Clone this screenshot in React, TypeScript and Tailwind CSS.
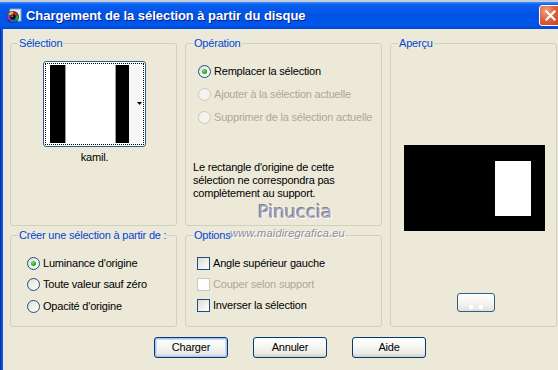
import React from "react";

function Radio({ checked = false, disabled = false }: { checked?: boolean; disabled?: boolean }) {
  return (
    <span
      className={
        "relative flex h-[13px] w-[13px] shrink-0 items-center justify-center rounded-full border " +
        (disabled
          ? "border-[#cac8bb] bg-[#f4f3ee]"
          : "border-[#1c5180] bg-[linear-gradient(135deg,#dcdcd7_0%,#f0f0ea_45%,#ffffff_100%)]")
      }
    >
      {checked && (
        <span className="h-[5px] w-[5px] rounded-full bg-[radial-gradient(circle_at_40%_35%,#7fe27f_0%,#21a121_60%,#1a8a1a_100%)]" />
      )}
    </span>
  );
}

function Check({ disabled = false }: { disabled?: boolean }) {
  return (
    <span
      className={
        "h-[13px] w-[13px] shrink-0 border " +
        (disabled
          ? "border-[#cac8bb] bg-white"
          : "border-[#1c5180] bg-[linear-gradient(135deg,#dcdcd7_0%,#f2f2ee_60%,#ffffff_100%)]")
      }
    />
  );
}

function Group({
  legend,
  className = "",
  children,
}: {
  legend: string;
  className?: string;
  children?: React.ReactNode;
}) {
  return (
    <div className={"relative rounded-[3px] border border-[#d0d0bf] " + className}>
      <span className="absolute -top-[7px] left-[7px] bg-[#ece9d8] px-[1px] leading-[13px] text-[#0046d5] whitespace-nowrap">
        {legend}
      </span>
      {children}
    </div>
  );
}

function Btn({ label, def = false, w = "w-[74px]" }: { label: string; def?: boolean; w?: string }) {
  return (
    <div
      className={
        "flex h-[21px] items-center justify-center rounded-[3px] border border-[#003c74] bg-[linear-gradient(180deg,#ffffff_0%,#f7f7f4_40%,#ecebe6_80%,#d6d0c5_100%)] leading-[13px] text-black " +
        w +
        (def ? " shadow-[inset_0_0_0_1px_#a9c4f2,inset_0_0_0_2px_#c9dbf8]" : "")
      }
    >
      {label}
    </div>
  );
}

function TitleIcon() {
  return (
    <svg width="16" height="16" viewBox="0 0 16 16">
      <rect x="4" y="1" width="11" height="12" fill="#e8eef8" stroke="#8aa0c0" strokeWidth="1" />
      <circle cx="7" cy="9" r="6" fill="#1a1a28" />
      <path d="M7 9 L7 3.5 A5.5 5.5 0 0 1 12 7 Z" fill="#d02020" />
      <path d="M7 9 L12 7 A5.5 5.5 0 0 1 10 13.5 Z" fill="#20a040" />
      <path d="M7 9 L10 13.5 A5.5 5.5 0 0 1 3 12.5 Z" fill="#2060d0" />
      <path d="M7 9 L3 12.5 A5.5 5.5 0 0 1 2 6 Z" fill="#c020c0" />
      <path d="M7 9 L2 6 A5.5 5.5 0 0 1 7 3.5 Z" fill="#e0c020" />
      <circle cx="7" cy="9" r="2.8" fill="#101018" />
      <circle cx="6.2" cy="8.2" r="0.9" fill="#8090b0" />
    </svg>
  );
}

export default function App() {
  return (
    <div className="relative h-[370px] w-[558px] overflow-hidden bg-[#ece9d8] font-['Liberation_Sans',Arial,sans-serif] text-[11px] tracking-[-0.2px] text-black">
      <div className="h-[2px] bg-[#c4ccd8]" />
      {/* Title bar */}
      <div className="flex h-[27px] items-center bg-[linear-gradient(180deg,#3d8dff_0%,#0a5ff0_10%,#0054e3_45%,#0056ea_85%,#0046d6_100%)] pl-[6px]">
        <TitleIcon />
        <span className="ml-[4px] font-['Liberation_Sans',Arial,sans-serif] text-[13px] font-bold leading-[16px] tracking-[-0.05px] text-white [text-shadow:1px_1px_0_#0a1e8c] whitespace-nowrap">
          Chargement de la sélection à partir du disque
        </span>
        <div className="ml-auto mr-[-3px] flex h-[21px] w-[22px] items-center justify-center rounded-[3px] border border-white bg-[radial-gradient(circle_at_30%_25%,#f0a085_0%,#e0603c_45%,#c8401c_100%)]">
          <svg width="11" height="11" viewBox="0 0 11 11">
            <path d="M1.5 1.5 L9.5 9.5 M9.5 1.5 L1.5 9.5" stroke="#ffffff" strokeWidth="2.2" strokeLinecap="square" />
          </svg>
        </div>
      </div>

      {/* Body */}
      <div className="flex h-[341px]">
        <div className="w-[3px] border-l border-[#0b2fa6] bg-[#0a55e6]" />
        <div className="flex flex-col pl-[7px] pt-[14px]">
          <div className="grid grid-cols-[167px_197px_167px] grid-rows-[183px_92px] gap-x-[8px] gap-y-[9px]">
            {/* Sélection */}
            <Group legend="Sélection">
              <div className="ml-[32px] mt-[17px] flex w-[103px] flex-col items-center">
                <div className="relative h-[86px] w-[103px] rounded-[3px] border border-[#2f5d8c] bg-white p-[1px]">
                  <div className="h-full w-full border border-dotted border-black p-[1px]">
                    <div className="flex h-full w-full bg-white">
                      <div className="w-[3px] bg-white" />
                      <div className="w-[15px] bg-black" />
                      <div className="w-[1px] bg-[#9a9a9a]" />
                      <div className="w-[49px] bg-white" />
                      <div className="w-[1px] bg-[#9a9a9a]" />
                      <div className="w-[13px] bg-black" />
                      <div className="flex-1 bg-[#f6f6f6]" />
                    </div>
                  </div>
                  <svg className="absolute left-[93px] top-[40px]" width="5" height="3" viewBox="0 0 5 3">
                    <path d="M0 0 H5 L2.5 3 Z" fill="#000" />
                  </svg>
                </div>
                <div className="mt-[4px] leading-[13px]">kamil.</div>
              </div>
            </Group>

            {/* Opération */}
            <Group legend="Opération">
              <div className="flex flex-col pl-[7px] pt-[21px]">
                <div className="ml-[5px] flex flex-col gap-[10px]">
                  <div className="flex h-[13px] items-center gap-[3px] leading-[13px]">
                    <Radio checked />
                    <span>Remplacer la sélection</span>
                  </div>
                  <div className="flex h-[13px] items-center gap-[3px] leading-[13px] text-[#aca899]">
                    <Radio disabled />
                    <span>Ajouter à la sélection actuelle</span>
                  </div>
                  <div className="flex h-[13px] items-center gap-[3px] leading-[13px] text-[#aca899]">
                    <Radio disabled />
                    <span>Supprimer de la sélection actuelle</span>
                  </div>
                </div>
                <p className="mt-[37px] leading-[13px]">
                  Le rectangle d'origine de cette
                  <br />
                  sélection ne correspondra pas
                  <br />
                  complètement au support.
                </p>
              </div>
            </Group>

            {/* Aperçu */}
            <Group legend="Aperçu" className="row-span-2">
              <div className="flex flex-col pt-[101px]">
                <div className="ml-[13px] flex h-[86px] w-[141px] bg-black pl-[91px] pt-[16px]">
                  <div className="h-[55px] w-[36px] bg-white" />
                </div>
                <div className="ml-[66px] mt-[62px] flex h-[19px] w-[38px] items-end justify-center rounded-[3px] border border-[#2f5d8c] bg-[linear-gradient(180deg,#ffffff_0%,#f2f2ee_60%,#e2e0d8_100%)] pb-[2px]">
                  <div className="flex gap-[1px]">
                    <div className="h-[4px] w-[4px] bg-white" />
                    <div className="h-[4px] w-[4px] bg-[#eeeeee]" />
                    <div className="h-[4px] w-[4px] bg-white" />
                  </div>
                </div>
              </div>
            </Group>

            {/* Créer */}
            <Group legend="Créer une sélection à partir de :">
              <div className="flex flex-col gap-[8.5px] pl-[16px] pt-[20.5px]">
                <div className="flex h-[13px] items-center gap-[3px] leading-[13px]">
                  <Radio checked />
                  <span>Luminance d'origine</span>
                </div>
                <div className="flex h-[13px] items-center gap-[3px] leading-[13px]">
                  <Radio />
                  <span>Toute valeur sauf zéro</span>
                </div>
                <div className="flex h-[13px] items-center gap-[3px] leading-[13px]">
                  <Radio />
                  <span>Opacité d'origine</span>
                </div>
              </div>
            </Group>

            {/* Options */}
            <Group legend="Options">
              <div className="flex flex-col gap-[8px] pl-[11px] pt-[21px]">
                <div className="flex h-[13px] items-center gap-[3px] leading-[13px]">
                  <Check />
                  <span>Angle supérieur gauche</span>
                </div>
                <div className="flex h-[13px] items-center gap-[3px] leading-[13px] text-[#aca899]">
                  <Check disabled />
                  <span>Couper selon support</span>
                </div>
                <div className="flex h-[13px] items-center gap-[3px] leading-[13px]">
                  <Check />
                  <span>Inverser la sélection</span>
                </div>
              </div>
            </Group>
          </div>

          <div className="mt-[10px] flex gap-[25px] pl-[144px]">
            <Btn label="Charger" def />
            <Btn label="Annuler" />
            <Btn label="Aide" />
          </div>
        </div>
      </div>

      {/* Watermark */}
      <div className="pointer-events-none absolute left-[258px] top-[201px] font-['DejaVu_Sans',sans-serif] text-[18px] leading-[22px] tracking-[0px] text-[#a3a3b8] [text-shadow:1px_1px_0_#ffffff,-1px_-1px_0_#7c7c90]">
        Pinuccia
      </div>
      <div className="pointer-events-none absolute left-[230px] top-[227px] font-['Liberation_Sans',sans-serif] text-[11px] italic leading-[13px] tracking-[0.2px] text-[#8e8ea2] [text-shadow:1px_1px_0_#ffffff]">
        www.maidiregrafica.eu
      </div>
    </div>
  );
}
